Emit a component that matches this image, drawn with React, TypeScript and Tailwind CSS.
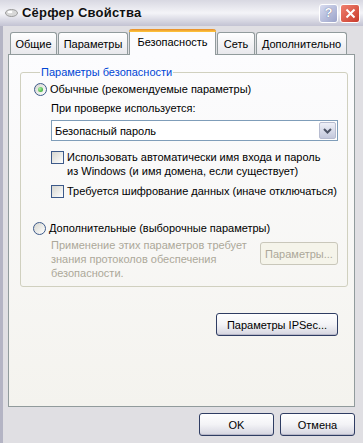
import React from 'react';

const tabs = [
  { label: 'Общие', w: 'w-[47px]' },
  { label: 'Параметры', w: 'w-[70px]' },
  { label: 'Безопасность', w: 'w-[87px]', active: true },
  { label: 'Сеть', w: 'w-[38px]' },
  { label: 'Дополнительно', w: 'w-[91px]' },
];

const Radio: React.FC<{ checked?: boolean }> = ({ checked }) => (
  <span className="w-[13px] h-[13px] rounded-full border border-[#3d5a8a] bg-gradient-to-br from-[#d6d6d0] to-white flex items-center justify-center shrink-0">
    {checked && (
      <span className="w-[5px] h-[5px] rounded-full bg-[radial-gradient(circle_at_35%_35%,#a8f0a0,#1f9a1f)]" />
    )}
  </span>
);

const Checkbox: React.FC = () => (
  <span className="block w-[13px] h-[13px] border border-[#3d5a8a] bg-gradient-to-br from-[#d6d6d0] to-white shrink-0" />
);

const XPButton: React.FC<{ className?: string; disabled?: boolean; children: React.ReactNode }> = ({
  className = '',
  disabled,
  children,
}) => (
  <div
    className={`h-[23px] shrink-0 flex items-center justify-center rounded-[3px] border ${
      disabled
        ? 'border-[#c9c7ba] text-[#aca899] bg-[#f5f4ea]'
        : 'border-[#2f3d63] text-black bg-gradient-to-b from-white via-[#f3f3f6] to-[#d5d5e0] shadow-[inset_0_-1px_0_#b8b8c8]'
    } ${className}`}
  >
    {children}
  </div>
);

export default function App() {
  return (
    <div className="w-[363px] h-[443px] flex flex-col bg-[#e0dfe3] text-[11px] leading-[14px] text-black font-['Liberation_Sans',Arial,sans-serif] overflow-hidden">
      {/* Title bar */}
      <div className="h-[26px] shrink-0 flex items-center pl-[5px] pr-[3px] bg-gradient-to-b from-[#d8d8e2] via-[#f4f4f8] to-[#c3c3d3]">
        <svg width="13" height="10" viewBox="0 0 13 10" className="mr-[4px]">
          <ellipse cx="6.5" cy="5" rx="6" ry="3.5" fill="#d8d8d8" stroke="#9a9a9a" />
          <ellipse cx="5" cy="4" rx="2.5" ry="1.3" fill="#ffffff" />
        </svg>
        <span className="text-[13px] font-bold text-[#111] tracking-[0.2px]">Сёрфер Свойства</span>
        <div className="ml-auto flex gap-[2px]">
          <div className="w-[19px] h-[19px] rounded-[3px] border border-white bg-gradient-to-br from-[#d8dcf0] to-[#9ba3c9] flex items-center justify-center text-white font-bold text-[13px] [text-shadow:0_0_1px_#3a4670]">
            ?
          </div>
          <div className="w-[20px] h-[19px] rounded-[3px] border border-white bg-gradient-to-br from-[#f08070] to-[#c8382a] flex items-center justify-center">
            <svg width="11" height="11" viewBox="0 0 11 11">
              <path d="M1.5 1.5 L9.5 9.5 M9.5 1.5 L1.5 9.5" stroke="white" strokeWidth="2" />
            </svg>
          </div>
        </div>
      </div>

      {/* Body */}
      <div className="flex-1 flex flex-col border-l-[3px] border-[#b4b4c4] pl-[5px] pr-[8px]">
        {/* Tabs */}
        <div className="h-[26px] mt-[2px] flex items-end pl-[2px] relative z-10">
          {tabs.map((t) =>
            t.active ? (
              <div
                key={t.label}
                className={`${t.w} h-[26px] -mb-px mr-[1px] relative border-x border-[#919b9c] bg-[#fcfcfe] rounded-t-[3px] flex items-center justify-center`}
              >
                <span className="absolute top-0 left-[-1px] right-[-1px] h-[3px] rounded-t-[3px] bg-gradient-to-b from-[#e68b2c] to-[#ffc83c]" />
                {t.label}
              </div>
            ) : (
              <div
                key={t.label}
                className={`${t.w} h-[22px] mr-[1px] border border-b-0 border-[#919b9c] rounded-t-[3px] bg-gradient-to-b from-white to-[#e8e8ec] flex items-center justify-center`}
              >
                {t.label}
              </div>
            )
          )}
        </div>

        {/* Panel */}
        <div className="h-[353px] border border-[#919b9c] bg-gradient-to-b from-[#fcfcfe] to-[#f4f3ee] flex flex-col">
          <fieldset className="ml-[11px] mr-[6px] mt-[10px] border border-[#d0d0bf] rounded-[3px] pl-[13px] pr-[9px] pb-[6px]">
            <legend className="ml-[6px] px-[1px] text-[#0046d5]">Параметры безопасности</legend>

            <div className="flex items-center gap-[3px] mt-[3px]">
              <Radio checked />
              <span>Обычные (рекомендуемые параметры)</span>
            </div>

            <div className="pl-[17px]">
              <div className="mt-[5px]">При проверке используется:</div>
              <div className="mt-[5px] h-[21px] border border-[#7f9db9] bg-white flex items-center pl-[3px]">
                <span className="flex-1">Безопасный пароль</span>
                <span className="w-[17px] h-[17px] mr-[1px] rounded-[2px] border border-[#b7bcd0] bg-gradient-to-b from-[#eef0f8] to-[#c3c8dc] flex items-center justify-center">
                  <svg width="9" height="6" viewBox="0 0 9 6">
                    <path d="M1 1 L4.5 4.5 L8 1" fill="none" stroke="#4d5466" strokeWidth="2" />
                  </svg>
                </span>
              </div>

              <div className="mt-[9px] flex gap-[3px]">
                <div className="pt-[1px] shrink-0">
                  <Checkbox />
                </div>
                <span className="whitespace-nowrap">
                  Использовать автоматически имя входа и пароль
                  <br />
                  из Windows (и имя домена, если существует)
                </span>
              </div>

              <div className="mt-[6px] flex items-center gap-[3px]">
                <Checkbox />
                <span className="whitespace-nowrap">Требуется шифрование данных (иначе отключаться)</span>
              </div>
            </div>

            <div className="mt-[23px] flex items-center gap-[3px] -ml-px">
              <Radio />
              <span>Дополнительные (выборочные параметры)</span>
            </div>

            <div className="pl-[17px] mt-[3px] flex items-start">
              <span className="text-[#aca899] whitespace-nowrap">
                Применение этих параметров требует
                <br />
                знания протоколов обеспечения
                <br />
                безопасности.
              </span>
              <XPButton disabled className="w-[78px] ml-auto mt-[4px]">
                Параметры...
              </XPButton>
            </div>
          </fieldset>

          <div className="mt-[26px] flex justify-end pr-[16px]">
            <XPButton className="w-[122px]">Параметры IPSec...</XPButton>
          </div>
        </div>

        {/* Dialog buttons */}
        <div className="mt-[6px] flex justify-end gap-[6px]">
          <XPButton className="w-[75px]">OK</XPButton>
          <XPButton className="w-[75px]">Отмена</XPButton>
        </div>
      </div>
    </div>
  );
}
